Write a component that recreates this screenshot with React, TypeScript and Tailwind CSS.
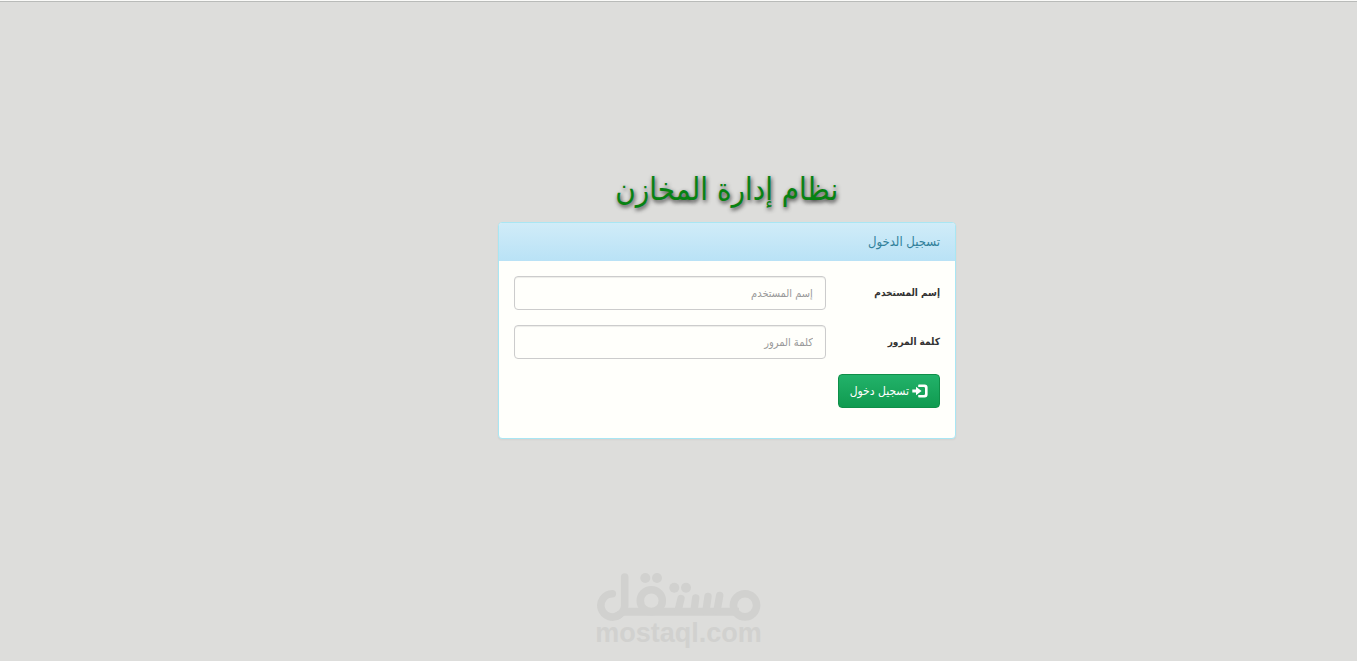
import React from "react";

function SignInIcon() {
  return (
    <svg viewBox="0 0 16 14" className="h-[14px] w-4 shrink-0" aria-hidden="true">
      <path
        d="M6.200 3V1.200Q6.200 0.500 7 0.500H12.600Q15.600 0.500 15.600 3.500V10.500Q15.600 13.500 12.600 13.500H7Q6.200 13.500 6.200 12.800V11H11.800Q13 11 13 9.800V4.200Q13 3 11.800 3Z"
        fill="#fff"
      />
      <path d="M4 2.800L9.600 7L4 11.200V8.500H0.300V5.500H4Z" fill="#fff" />
    </svg>
  );
}

function Watermark() {
  return (
    <div dir="ltr" className="flex flex-col items-center text-[#d1d1cf]">
      <svg viewBox="0 2 164 50" className="h-[50px] w-[164px]" aria-hidden="true">
        <g fill="none" stroke="currentColor" strokeWidth="7.600" strokeLinecap="round">
          <path d="M15.300 23.800A11.600 11.600 0 1 0 22 45" />
          <path d="M27.700 7V35.400Q27.700 41.700 21 45.500" />
          <circle cx="54.300" cy="30.700" r="11" />
          <circle cx="148" cy="35.300" r="11.600" />
          <path d="M24 41.700H142" strokeWidth="8" strokeLinecap="butt" />
          <path d="M84 28.500L81 41M98.700 28L97 41M111 26.500L109 41M122.700 25.500L120 41" strokeWidth="7.400" />
        </g>
        <g fill="currentColor">
          <circle cx="48.300" cy="8" r="5" />
          <circle cx="60" cy="8" r="5" />
          <circle cx="77.300" cy="17.700" r="5" />
          <circle cx="89" cy="17.700" r="5" />
        </g>
      </svg>
      <span className="font-['Liberation_Sans',Arial,sans-serif] text-[27px] leading-[22px] font-bold">mostaql.com</span>
    </div>
  );
}

type FieldProps = { id: string; label: string; type: string };

function Field({ id, label, type }: FieldProps) {
  return (
    <div className="-mx-[15px] mb-[15px] grid grid-cols-12">
      <label htmlFor={id} className="col-span-3 px-[15px] pt-[7px] text-[10px] leading-5 font-bold whitespace-nowrap text-[#333]">
        {label}
      </label>
      <div className="col-span-9 px-[15px]">
        <input
          id={id}
          type={type}
          placeholder={label}
          className="block h-[34px] w-full rounded border border-[#ccc] bg-[#fffffb] px-3 text-[11px] text-[#555] shadow-[inset_0_1px_1px_rgba(0,0,0,0.075)] outline-none placeholder:text-[#999] focus:border-[#66afe9]"
        />
      </div>
    </div>
  );
}

export default function App() {
  return (
    <div
      dir="rtl"
      className="flex min-h-screen flex-col border-t border-[#fafaf8] bg-[#dddddb] font-['DejaVu_Sans_Condensed','DejaVu_Sans',sans-serif]"
    >
      <div className="border-t border-[#b9bbb9]" />
      <main className="mx-auto grid w-full max-w-[1170px] grid-cols-12 pt-[167px]">
        <section className="col-span-5 col-start-4 pr-[15px] pl-[14px]">
          <h1 className="mb-[13px] text-center text-[31px] leading-10 text-[#078212] [text-shadow:1px_2px_4px_#333]">
            نظام إدارة المخازن
          </h1>
          <div className="rounded border border-[#a9e6f3] bg-[#fffffb] shadow-[0_1px_2px_rgba(0,0,0,0.05)]">
            <div className="rounded-t-[3px] bg-linear-to-b from-[#d0ecf8] to-[#b9e2f6] px-[15px] py-[9px]">
              <h2 className="text-[13px] leading-5 text-[#31809a]">تسجيل الدخول</h2>
            </div>
            <form className="p-[15px]" onSubmit={(e) => e.preventDefault()}>
              <Field id="username" label="إسم المستخدم" type="text" />
              <Field id="password" label="كلمة المرور" type="password" />
              <button
                type="submit"
                className="mb-[15px] flex h-[34px] items-center gap-[3px] rounded border border-[#0f8f48] bg-linear-to-b from-[#22b26a] to-[#0f9b50] px-[11px] text-[12px] text-white"
              >
                <SignInIcon />
                تسجيل دخول
              </button>
            </form>
          </div>
        </section>
      </main>
      <footer className="mt-auto pb-[17px]">
        <Watermark />
      </footer>
    </div>
  );
}
